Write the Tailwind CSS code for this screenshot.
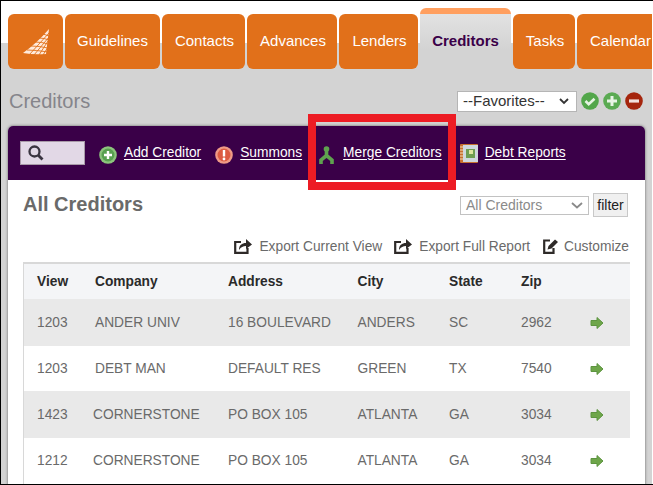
<!DOCTYPE html>
<html>
<head>
<meta charset="utf-8">
<script src="https://cdn.jsdelivr.net/npm/@tailwindcss/browser@4"></script>
</head>
<body class="bg-white">
<div class="relative h-[485px] w-[653px] overflow-hidden border-l border-t border-b border-black font-['Liberation_Sans',Arial,sans-serif] pr-px">
  <div class="h-full overflow-hidden bg-[#d3d3d3]">
    <nav class="flex h-[68px] items-end gap-[2px] pl-[7px] bg-[linear-gradient(#fff_42px,#d3d3d3_42px)] text-[15px] text-white">
      <a class="flex h-[55px] w-[55px] shrink-0 items-center justify-center rounded-[6px] bg-[#e1701a]">
        <svg width="28" height="26" viewBox="0 0 28 26">
          <path d="M1 24Q15 14 27 0L24 25Q12 26 1 24Z" fill="#ffeadb"/>
          <g fill="none" stroke="#e1701a" stroke-width="0.9">
            <path d="M7 26L27 4M12 26L27 8M17 26L26 12M21 26L26 18"/>
            <path d="M5 21Q14 21 26 23M9 17Q17 17 26 19M13 13Q20 13 26 15M17 9Q22 9 27 11M21 5L27 7"/>
          </g>
        </svg>
      </a>
      <a class="flex h-[55px] w-[95px] shrink-0 items-center justify-center rounded-[6px] bg-[#e1701a]">Guidelines</a>
      <a class="flex h-[55px] w-[83px] shrink-0 items-center justify-center rounded-[6px] bg-[#e1701a] pl-[2px]">Contacts</a>
      <a class="flex h-[55px] w-[90px] shrink-0 items-center justify-center rounded-[6px] bg-[#e1701a] pl-[2px]">Advances</a>
      <a class="flex h-[55px] w-[79px] shrink-0 items-center justify-center rounded-[6px] bg-[#e1701a] pl-[2px]">Lenders</a>
      <a class="flex h-[61px] w-[91px] shrink-0 items-center justify-center rounded-t-[6px] border-t-[6px] border-[#ff9f5f] bg-[linear-gradient(#e2e2e2,#d3d3d3_65%)] font-bold text-[#3a0048]">Creditors</a>
      <a class="flex h-[55px] w-[62px] shrink-0 items-center justify-center rounded-[6px] bg-[#e1701a] pl-[2px]">Tasks</a>
      <a class="flex h-[55px] w-[90px] shrink-0 items-center rounded-[6px] bg-[#e1701a] pl-[13px]">Calendar</a>
    </nav>

    <div class="flex h-[57px] items-center pl-[8px] pr-[9px] pt-[7px]">
      <h1 class="flex-1 text-[20px] leading-none text-[#85858b]">Creditors</h1>
      <div class="flex h-[21px] w-[120px] items-center justify-between border border-[#b5b5b5] bg-white pl-[5px] pr-[7px] text-[15px] text-[#333]">
        <span>--Favorites--</span>
        <svg width="10" height="7" viewBox="0 0 10 7" fill="none" stroke="#333" stroke-width="1.8"><path d="M1 1l4 4 4-4"/></svg>
      </div>
      <svg class="ml-[4px]" width="18" height="18" viewBox="0 0 18 18"><circle cx="9" cy="9" r="8.800" fill="#52a64a"/><path d="M4.500 9l3.200 3.200 5.800-5.500" fill="none" stroke="#e5f3e2" stroke-width="2.600"/></svg>
      <svg class="ml-[4px]" width="18" height="18" viewBox="0 0 18 18"><circle cx="9" cy="9" r="8.800" fill="#5aaa52"/><path d="M9 4v10M4 9h10" stroke="#e8f4e5" stroke-width="3"/></svg>
      <svg class="ml-[4px]" width="18" height="18" viewBox="0 0 18 18"><circle cx="9" cy="9" r="8.800" fill="#a5250d"/><path d="M4 9h10" stroke="#f2e0dc" stroke-width="3.200"/></svg>
    </div>

    <main class="mx-[7px] h-[400px] rounded-t-[5px] bg-white shadow-[0_0_3px_rgba(0,0,0,0.55)]">
      <div class="flex h-[54px] items-center rounded-t-[5px] bg-[#3a0048] pl-[12px] text-[13.75px] text-white">
        <div class="flex h-[24px] w-[65px] items-center border border-[#a89aa8] bg-[#e2d8e6] pl-[7px]">
          <svg width="16" height="16" viewBox="0 0 16 16" fill="none" stroke="#3a3440" stroke-width="2.300"><circle cx="6.500" cy="6.500" r="5"/><path d="M10 10l4.500 4.500" stroke-width="2.800"/></svg>
        </div>
        <svg class="ml-[14px] mt-[3px]" width="18" height="18" viewBox="0 0 18 18"><circle cx="9" cy="9" r="8.800" fill="#8cc47c"/><circle cx="9" cy="9" r="6.500" fill="#58a050"/><path d="M9 5v8M5 9h8" stroke="#fff" stroke-width="2.400"/></svg>
        <a class="ml-[7px] underline underline-offset-2">Add Creditor</a>
        <svg class="ml-[14px] mt-[3px]" width="18" height="18" viewBox="0 0 18 18"><circle cx="9" cy="9" r="8.800" fill="#ef9a86"/><circle cx="9" cy="9" r="6.500" fill="#dc5c42"/><path d="M9 4v6.500" stroke="#fff" stroke-width="2.400"/><circle cx="9" cy="13" r="1.400" fill="#fff"/></svg>
        <a class="ml-[7px] underline underline-offset-2">Summons</a>
        <svg class="ml-[16px] mt-[3px]" width="17" height="18" viewBox="0 0 17 18" fill="none" stroke="#5fa24f" stroke-width="3.600"><circle cx="8.500" cy="3" r="2.800" fill="#5fa24f" stroke="none"/><path d="M8.500 4V9.500M8.500 9.500L3 14V18M8.500 9.500L14 14V18"/></svg>
        <a class="ml-[8px] underline underline-offset-2">Merge Creditors</a>
        <svg class="ml-[18px]" width="18" height="19" viewBox="0 0 18 19"><rect x="0" y="0" width="18" height="19" rx="1" fill="#c8702e"/><rect x="3" y="1" width="15" height="17" fill="#cfd8de"/><rect x="6" y="5" width="9" height="9" fill="#6f9e52"/><rect x="9" y="6" width="4" height="4" fill="#dfe6a0"/><path d="M0 3h3M0 6h3M0 9h3M0 12h3M0 15h3" stroke="#f1d9b8" stroke-width="1"/></svg>
        <a class="ml-[7px] underline underline-offset-2">Debt Reports</a>
      </div>

      <div class="px-[15px]">
        <div class="flex h-[48px] items-center justify-between">
          <h2 class="text-[20px] font-bold leading-none text-[#6a6a6a]">All Creditors</h2>
          <div class="mr-[2px] mt-[2px] flex items-center gap-[4px]">
            <div class="flex h-[19px] w-[129px] items-center justify-between border border-[#c2c2c2] bg-white pl-[5px] pr-[5px] text-[14px] text-[#8a8a8a]">
              <span>All Creditors</span>
              <svg width="12" height="7" viewBox="0 0 12 7" fill="none" stroke="#8a8a8a" stroke-width="1.800"><path d="M1 1l5 4.500 5-4.500"/></svg>
            </div>
            <div class="flex h-[24px] w-[35px] items-center justify-center border border-[#c8c8c8] bg-[#f0f0f0] text-[14px] text-[#222]">filter</div>
          </div>
        </div>

        <div class="flex h-[34px] items-center justify-end gap-[12px] pr-[1px] pt-[4px] text-[13.75px] text-[#6a6a6a]">
          <span class="flex items-center gap-[7px]">
            <svg class="-translate-y-[1px]" width="18" height="16" viewBox="0 0 18 16"><path d="M7 4H1.200V14.800H13.500V10" fill="none" stroke="#2e2a28" stroke-width="2.200"/><path d="M5 12C5 7 8 5 12 5V1L18 6.500 12 11V8C9 8 7 9 5 12Z" fill="#2e2a28"/></svg>
            Export Current View
          </span>
          <span class="flex items-center gap-[7px]">
            <svg class="-translate-y-[1px]" width="18" height="16" viewBox="0 0 18 16"><path d="M7 4H1.200V14.800H13.500V10" fill="none" stroke="#2e2a28" stroke-width="2.200"/><path d="M5 12C5 7 8 5 12 5V1L18 6.500 12 11V8C9 8 7 9 5 12Z" fill="#2e2a28"/></svg>
            Export Full Report
          </span>
          <span class="ml-[1px] flex items-center gap-[6px]">
            <svg class="-translate-y-[1px]" width="15" height="16" viewBox="0 0 15 16"><path d="M7 2.500H1.200V14.800H10.500V10" fill="none" stroke="#2e2a28" stroke-width="2.200"/><path d="M4.500 11.500L5.500 8 12 1.500 15 4 8.500 10.500Z" fill="#2e2a28"/></svg>
            Customize
          </span>
        </div>

        <table class="w-[607px] table-fixed border-collapse border-t-2 border-l border-[#d8d8d8] text-left text-[13.75px] text-[#6a6a6a]">
          <colgroup>
            <col class="w-[57px]"><col class="w-[133px]"><col class="w-[130px]"><col class="w-[91px]"><col class="w-[72px]"><col class="w-[70px]"><col>
          </colgroup>
          <thead class="bg-[#f4f5f7] text-[#2a2a2a]">
            <tr class="h-[36px] [&>th]:pt-[2px]">
              <th class="pl-[13px] font-bold">View</th><th class="pl-[14.5px] font-bold">Company</th><th class="pl-[14.5px] font-bold">Address</th><th class="pl-[14px] font-bold">City</th><th class="pl-[14.5px] font-bold">State</th><th class="pl-[14.5px] font-bold">Zip</th><th></th>
            </tr>
          </thead>
          <tbody>
            <tr class="h-[47px] bg-[#e9e9e9] [&>td]:pt-[2px]">
              <td class="pl-[13px]">1203</td><td class="pl-[14.5px]">ANDER UNIV</td><td class="pl-[14.5px]">16 BOULEVARD</td><td class="pl-[14px]">ANDERS</td><td class="pl-[14.5px]">SC</td><td class="pl-[14.5px]">2962</td>
              <td class="pl-[13px]"><svg class="-translate-y-[1px]" width="14" height="12" viewBox="0 0 14 12"><path d="M1 3.500h6V.5l6 5.500-6 5.500v-3H1z" fill="#6ea64a" stroke="#5d9440"/></svg></td>
            </tr>
            <tr class="h-[45px] bg-white [&>td]:pt-[2px]">
              <td class="pl-[13px]">1203</td><td class="pl-[14.5px]">DEBT MAN</td><td class="pl-[14.5px]">DEFAULT RES</td><td class="pl-[14px]">GREEN</td><td class="pl-[14.5px]">TX</td><td class="pl-[14.5px]">7540</td>
              <td class="pl-[13px]"><svg class="-translate-y-[1px]" width="14" height="12" viewBox="0 0 14 12"><path d="M1 3.500h6V.5l6 5.500-6 5.500v-3H1z" fill="#6ea64a" stroke="#5d9440"/></svg></td>
            </tr>
            <tr class="h-[47px] bg-[#e9e9e9] [&>td]:pt-[2px]">
              <td class="pl-[13px]">1423</td><td class="pl-[12.5px]">CORNERSTONE</td><td class="pl-[14.5px]">PO BOX 105</td><td class="pl-[14px]">ATLANTA</td><td class="pl-[14.5px]">GA</td><td class="pl-[14.5px]">3034</td>
              <td class="pl-[13px]"><svg class="-translate-y-[1px]" width="14" height="12" viewBox="0 0 14 12"><path d="M1 3.500h6V.5l6 5.500-6 5.500v-3H1z" fill="#6ea64a" stroke="#5d9440"/></svg></td>
            </tr>
            <tr class="h-[46px] bg-white">
              <td class="pl-[13px]">1212</td><td class="pl-[12.5px]">CORNERSTONE</td><td class="pl-[14.5px]">PO BOX 105</td><td class="pl-[14px]">ATLANTA</td><td class="pl-[14.5px]">GA</td><td class="pl-[14.5px]">3034</td>
              <td class="pl-[13px]"><svg width="14" height="12" viewBox="0 0 14 12"><path d="M1 3.500h6V.5l6 5.500-6 5.500v-3H1z" fill="#6ea64a" stroke="#5d9440"/></svg></td>
            </tr>
          </tbody>
        </table>
      </div>
    </main>
  </div>
  <div class="pointer-events-none absolute left-[307px] top-[113px] h-[76px] w-[148px] border-[8px] border-[#ed1c24]"></div>
</div>
</body>
</html>
